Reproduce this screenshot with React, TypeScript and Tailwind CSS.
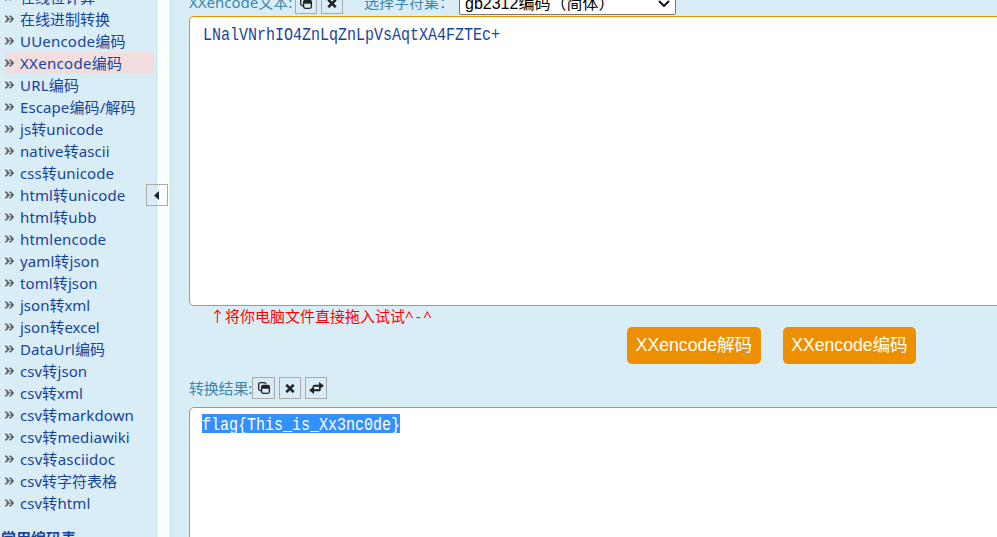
import React from "react";

const SANS = "font-['Noto_Sans','Noto_Sans_CJK_SC',sans-serif]";

const links: [string, string][] = [
  ["在线位计算", ""],
  ["在线进制转换", ""],
  ["UUencode编码", "tracking-[0.2px]"],
  ["XXencode编码", "tracking-[0.3px]"],
  ["URL编码", "tracking-[0.2px]"],
  ["Escape编码/解码", "tracking-[0.1px]"],
  ["js转unicode", "tracking-[0.1px]"],
  ["native转ascii", "tracking-[0.1px]"],
  ["css转unicode", "tracking-[0.1px]"],
  ["html转unicode", "tracking-[0.12px]"],
  ["html转ubb", "tracking-[0.15px]"],
  ["htmlencode", "tracking-[0.2px]"],
  ["yaml转json", "tracking-[0.1px]"],
  ["toml转json", "tracking-[0.1px]"],
  ["json转xml", ""],
  ["json转excel", ""],
  ["DataUrl编码", "tracking-[0.1px]"],
  ["csv转json", "tracking-[0.1px]"],
  ["csv转xml", ""],
  ["csv转markdown", "tracking-[0.1px]"],
  ["csv转mediawiki", "tracking-[0.1px]"],
  ["csv转asciidoc", "tracking-[0.17px]"],
  ["csv转字符表格", ""],
  ["csv转html", "tracking-[0.1px]"],
];

function Chevrons() {
  return (
    <svg className="mr-[6px] h-[8px] w-[9px] shrink-0" viewBox="0 0 9 8" fill="none" stroke="#5d6163" strokeWidth="1.5">
      <path d="M0 1.2h1.3L3.9 4 1.3 6.8H0M4.3 1.2h1.3L8.2 4 5.6 6.8H4.3M1.3 4H4M5.4 4H8" />
    </svg>
  );
}

function IconBox({ children, wide }: { children: React.ReactNode; wide?: boolean }) {
  return (
    <button className={"flex h-[22px] shrink-0 items-center justify-center border border-[#a9a9a9] " + (wide ? "w-[23px]" : "w-[22px]")}>
      {children}
    </button>
  );
}

function CopyIcon() {
  return (
    <svg className="h-[14px] w-[14px]" viewBox="0 0 14 14" fill="none" stroke="#222" strokeWidth="1.3">
      <path d="M4 9.6H3.2Q1.7 9.2 1.7 7.8V3.5Q1.7 1.7 3.5 1.7H7.2Q8.7 1.7 8.9 3.2" />
      <rect x="4.6" y="4.5" width="7.8" height="7.8" rx="1.8" />
      <path d="M4.8 6.2h7.4" strokeWidth="3" />
    </svg>
  );
}

function CrossIcon() {
  return (
    <svg className="h-[9px] w-[10px]" viewBox="0 0 10 9" fill="none" stroke="#222" strokeWidth="2.6">
      <path d="M1.3 0.8l7.4 7.4M8.7 0.8L1.3 8.2" />
    </svg>
  );
}

function SwapIcon() {
  return (
    <svg className="h-[12px] w-[15px]" viewBox="0 0 15 12" fill="#222">
      <path d="M10 0l5 3.7-5 3.7V4.8H5.2Q4 4.8 3.3 5.6 3.4 2.8 6 2.7h4zM5 4.6L0 8.3 5 12V9.3h4.5q2.5-.1 2.6-2.9-.8.8-2 .8H5z" />
    </svg>
  );
}

export default function App() {
  return (
    <div className={"relative flex h-[537px] w-[997px] overflow-hidden bg-white text-[15px] " + SANS}>
      <aside className="h-[537px] w-[157px] shrink-0 overflow-hidden border-r border-[#bce8f1] bg-[#d9edf7] text-[#17439c]">
        <ul className="-mt-[14px] ml-[5px] w-[149px]">
          {links.map(([text, tracking], i) => (
            <li key={text} className={"flex h-[22px] items-center whitespace-nowrap leading-[22px] " + (i === 3 ? "bg-[#f2dede]" : "")}>
              <Chevrons />
              <span className={tracking}>{text}</span>
            </li>
          ))}
        </ul>
        <h3 className="mt-[13px] ml-[1px] leading-[22px] font-bold">常用编码表</h3>
      </aside>
      <button className="absolute top-[184px] left-[146px] flex h-[22px] w-[22px] items-center justify-center border border-[#a9a9a9] pr-px">
        <svg className="h-[9px] w-[5px]" viewBox="0 0 5 9" fill="#222"><path d="M5 0v9L0 4.5z" /></svg>
      </button>
      <main className="ml-[13px] flex h-[537px] grow flex-col overflow-hidden border-l border-[#bce8f1] bg-[#d9edf7] pl-[18px] text-[#3a87ad]">
        <div className="-mt-[8px] flex h-[24px] shrink-0 items-start whitespace-nowrap">
          <span className="w-[106px] leading-[20px]">XXencode文本:</span>
          <IconBox><CopyIcon /></IconBox>
          <span className="w-[4px]" />
          <IconBox><CrossIcon /></IconBox>
          <span className="ml-[21px] w-[95px] leading-[20px]">选择字符集：</span>
          <div className="flex h-[23px] w-[217px] items-center justify-between rounded-[2px] border border-[#767676] bg-white pr-[5px] pl-[5px] font-['Liberation_Sans','Noto_Sans_CJK_SC',sans-serif] text-[16px] text-black">
            <span className="leading-[20px]">gb2312编码（简体）</span>
            <svg className="h-[7px] w-[12px]" viewBox="0 0 12 7" fill="none" stroke="#111" strokeWidth="2"><path d="M1 1l5 5 5-5" /></svg>
          </div>
        </div>
        <div className="h-[290px] w-[820px] shrink-0 rounded-[5px] border border-[#ec8f00] bg-white pt-[7px] pl-[13px] font-['Liberation_Mono',monospace] text-[15px] leading-[24px] text-[#17439c]">
          <span className="inline-block scale-y-[1.18]">LNalVNrhIO4ZnLqZnLpVsAqtXA4FZTEc+</span>
        </div>
        <div className="h-[21px] shrink-0 pl-[21px] leading-[21px] text-[#f00]">↑将你电脑文件直接拖入试试<span className="tracking-[2.4px]">^-^</span></div>
        <div className="flex h-[37px] shrink-0 gap-[22px] pl-[438px] font-['Liberation_Sans','Noto_Sans_CJK_SC',sans-serif] text-[17.6px] text-white">
          <button className="w-[134px] rounded-[5px] bg-[#ec8f00] whitespace-nowrap">XXencode解码</button>
          <button className="w-[133px] rounded-[5px] bg-[#ec8f00] whitespace-nowrap">XXencode编码</button>
        </div>
        <div className="mt-[13px] flex h-[22px] shrink-0 items-center whitespace-nowrap">
          <span className="w-[63px] leading-[22px] tracking-[-0.2px]">转换结果:</span>
          <IconBox wide><CopyIcon /></IconBox>
          <span className="w-[4px]" />
          <IconBox><CrossIcon /></IconBox>
          <span className="w-[4px]" />
          <IconBox><SwapIcon /></IconBox>
        </div>
        <div className="mt-[8px] h-[200px] w-[820px] shrink-0 rounded-[5px] border border-[#ec8f00] bg-white pt-[6px] pl-[12px] font-['Liberation_Mono',monospace] text-[15px] text-white">
          <div className="flex h-[19px] w-[198px] items-center bg-[#3390ff]">
            <span className="mt-[3px] scale-y-[1.18] leading-[19px]">flag{"{"}This_is_Xx3nc0de{"}"}</span>
          </div>
        </div>
      </main>
    </div>
  );
}
